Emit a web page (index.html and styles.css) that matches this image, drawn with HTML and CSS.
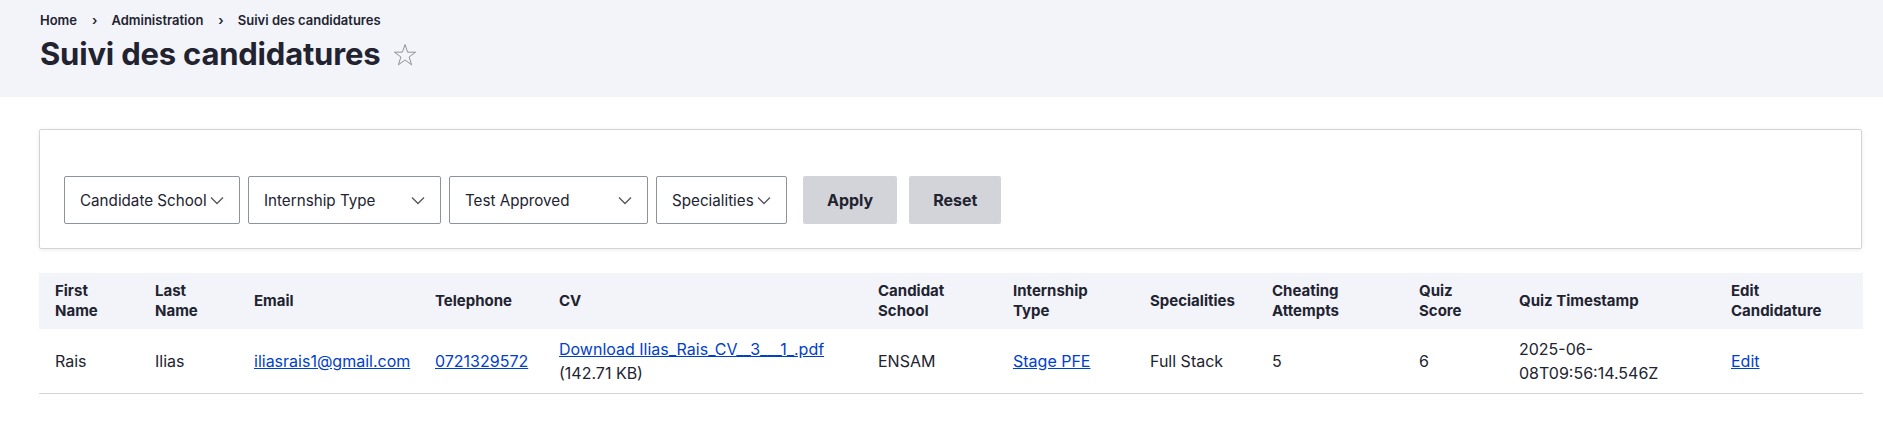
FILE: index.html
```html
<!DOCTYPE html>
<html lang="fr">
<head>
<meta charset="utf-8">
<title>Suivi des candidatures</title>
<link rel="stylesheet" href="styles.css">
</head>
<body>
<header class="page-header">
  <nav class="breadcrumb">
    <a class="crumb" href="#">Home</a>
    <span class="sep">›</span>
    <a class="crumb" href="#">Administration</a>
    <span class="sep">›</span>
    <span class="crumb">Suivi des candidatures</span>
  </nav>
  <div class="title-row">
    <h1 class="page-title">Suivi des candidatures</h1>
    <svg class="star" width="24" height="24" viewBox="0 0 24 24" aria-hidden="true">
      <polygon points="12,1.5 14.6,9.2 22.6,9.2 16.1,14 18.6,21.8 12,17 5.4,21.8 7.9,14 1.4,9.2 9.4,9.2" fill="none" stroke="#8e929c" stroke-width="1" stroke-linejoin="miter"/>
    </svg>
  </div>
</header>

<main class="content">
  <form class="filters">
    <div class="select sel-school"><span>Candidate School</span><svg class="chev" width="14" height="9" viewBox="0 0 14 9"><path d="M1 1.5l6 6 6-6" fill="none" stroke="#545560" stroke-width="1.3"/></svg></div>
    <div class="select sel-type"><span>Internship Type</span><svg class="chev" width="14" height="9" viewBox="0 0 14 9"><path d="M1 1.5l6 6 6-6" fill="none" stroke="#545560" stroke-width="1.3"/></svg></div>
    <div class="select sel-test"><span>Test Approved</span><svg class="chev" width="14" height="9" viewBox="0 0 14 9"><path d="M1 1.5l6 6 6-6" fill="none" stroke="#545560" stroke-width="1.3"/></svg></div>
    <div class="select sel-spec"><span>Specialities</span><svg class="chev" width="14" height="9" viewBox="0 0 14 9"><path d="M1 1.5l6 6 6-6" fill="none" stroke="#545560" stroke-width="1.3"/></svg></div>
    <div class="actions">
      <button type="button" class="btn">Apply</button>
      <button type="button" class="btn">Reset</button>
    </div>
  </form>

  <table class="data">
    <colgroup>
      <col class="w-first"><col class="w-last"><col class="w-email"><col class="w-tel"><col class="w-cv"><col class="w-school"><col class="w-type"><col class="w-spec"><col class="w-cheat"><col class="w-score"><col class="w-time"><col class="w-edit">
    </colgroup>
    <thead>
      <tr>
        <th>First Name</th>
        <th>Last Name</th>
        <th>Email</th>
        <th>Telephone</th>
        <th>CV</th>
        <th>Candidat School</th>
        <th>Internship Type</th>
        <th>Specialities</th>
        <th>Cheating Attempts</th>
        <th>Quiz Score</th>
        <th>Quiz Timestamp</th>
        <th>Edit Candidature</th>
      </tr>
    </thead>
    <tbody>
      <tr>
        <td>Rais</td>
        <td>Ilias</td>
        <td><a href="#">iliasrais1@gmail.com</a></td>
        <td><a href="#">0721329572</a></td>
        <td><a href="#">Download Ilias_Rais_CV__3___1_.pdf</a><br>(142.71 KB)</td>
        <td>ENSAM</td>
        <td><a href="#">Stage PFE</a></td>
        <td>Full Stack</td>
        <td>5</td>
        <td>6</td>
        <td>2025-06-08T09:56:14.546Z</td>
        <td><a href="#">Edit</a></td>
      </tr>
    </tbody>
  </table>
</main>
</body>
</html>
```
FILE: styles.css
```css
* { box-sizing: border-box; }

html, body {
  margin: 0;
  padding: 0;
  background: #ffffff;
  color: #222330;
  font-family: Inter, "Noto Sans", "Liberation Sans", sans-serif;
}

.page-header {
  background: #f3f4f9;
  height: 97px;
  padding: 11px 40px 0 40px;
}

.breadcrumb {
  display: flex;
  align-items: center;
  font-size: 13px;
  line-height: 18px;
  font-weight: 600;
}

.crumb {
  color: #222330;
  text-decoration: none;
}

.sep {
  margin: 0 14px 0 15px;
  font-weight: 600;
}

.title-row {
  display: flex;
  align-items: center;
  margin-top: 5px;
}

.page-title {
  margin: 0;
  font-size: 31px;
  line-height: 40px;
  font-weight: 700;
  letter-spacing: -0.2px;
  color: #222330;
}

.star {
  margin-left: 13px;
  margin-top: 2px;
}

.content {
  padding: 32px 21px 0 39px;
}

.filters {
  display: flex;
  align-items: center;
  border: 1px solid #d4d4d8;
  border-radius: 2px;
  box-shadow: 0 1px 4px rgba(0, 0, 0, 0.08);
  padding: 46px 24px 24px 24px;
  gap: 8px;
}

.select {
  position: relative;
  height: 48px;
  display: flex;
  align-items: center;
  padding-left: 15px;
  border: 1px solid #8e929c;
  border-radius: 2px;
  font-size: 15.2px;
  color: #222330;
  white-space: nowrap;
}

.chev {
  position: absolute;
  right: 15px;
  top: 19px;
}

.sel-school { width: 176px; }
.sel-type { width: 193px; }
.sel-test { width: 199px; }
.sel-spec { width: 131px; }

.actions {
  display: flex;
  gap: 12px;
  margin-left: 8px;
}

.btn {
  height: 48px;
  padding: 0 24px;
  border: 0;
  border-radius: 2px;
  background: #d3d4d9;
  color: #222330;
  font-family: inherit;
  font-size: 16px;
  font-weight: 700;
}

.data {
  width: 100%;
  margin-top: 24px;
  border-collapse: collapse;
  table-layout: fixed;
}

.w-first { width: 100px; }
.w-last { width: 99px; }
.w-email { width: 181px; }
.w-tel { width: 124px; }
.w-cv { width: 319px; }
.w-school { width: 135px; }
.w-type { width: 137px; }
.w-spec { width: 122px; }
.w-cheat { width: 147px; }
.w-score { width: 100px; }
.w-time { width: 212px; }
.w-edit { width: 148px; }

.data th {
  background: #f3f4f9;
  text-align: left;
  vertical-align: middle;
  padding: 8px 16px;
  font-size: 15px;
  line-height: 20px;
  font-weight: 700;
  color: #222330;
}

.data td {
  padding: 8px 16px;
  font-size: 16px;
  line-height: 24px;
  vertical-align: middle;
  border-bottom: 1px solid #d3d4d9;
  color: #222330;
}

.data a {
  color: #003ecc;
  text-decoration: underline;
}
```
